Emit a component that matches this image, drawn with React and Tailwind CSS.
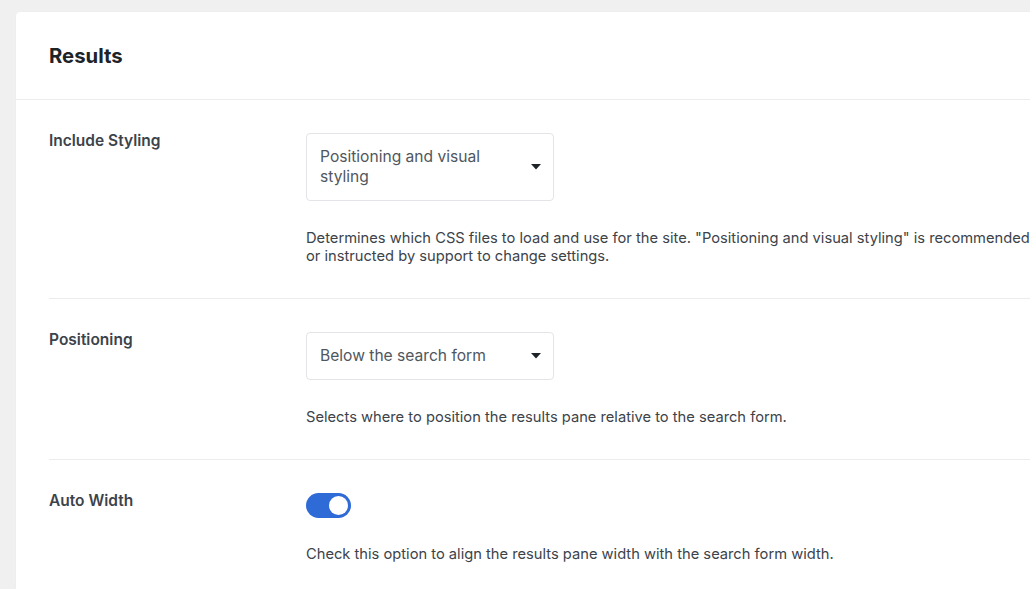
import React from "react";

const font = { fontFamily: "Inter, 'Noto Sans', sans-serif" };

function Caret() {
  return (
    <svg width="10" height="6" viewBox="0 0 10 6" className="shrink-0">
      <path d="M0 0 L10 0 L5 5.5 Z" fill="#1d2327" />
    </svg>
  );
}

function Select({ children }) {
  return (
    <div className="flex w-[248px] items-center justify-between rounded-[4px] border border-[#e2e4e7] bg-white py-[13px] pl-[13px] pr-[12px]">
      <div className="w-[185px] text-[15.6px] leading-[20px] text-[#50575e]">{children}</div>
      <Caret />
    </div>
  );
}

function Row({ label, children, last }) {
  return (
    <div className={"flex " + (last ? "" : "border-b border-[#ececee]") + " pt-[33px]"}>
      <div className="w-[257px] shrink-0 -mt-[2px] text-[15.5px] font-semibold leading-[20px] text-[#3c434a]">
        {label}
      </div>
      <div className="flex flex-col">{children}</div>
    </div>
  );
}

function Desc({ children }) {
  return (
    <div className="whitespace-nowrap text-[14.7px] leading-[18px] text-[#3c434a]">{children}</div>
  );
}

export default function App() {
  return (
    <div style={font} className="h-[589px] w-[1030px] overflow-hidden bg-[#f0f0f1] pl-4 pt-3">
      <div className="w-[1100px] h-[600px] rounded-tl-[4px] bg-white shadow-[0_0_1px_rgba(0,0,0,0.08)]">
        <div className="flex h-[88px] items-center border-b border-[#ececee] px-[33px] pt-[1px]">
          <h1 className="text-[20.3px] font-bold text-[#1d2327]">Results</h1>
        </div>
        <div className="px-[33px]">
          <Row label="Include Styling">
            <Select>Positioning and visual styling</Select>
            <div className="mt-[28px] pb-[33px]">
              <Desc>
                Determines which CSS files to load and use for the site. "Positioning and visual styling" is recommended,
              </Desc>
              <Desc>or instructed by support to change settings.</Desc>
            </div>
          </Row>
          <Row label="Positioning">
            <Select>Below the search form</Select>
            <div className="mt-[28px] pb-[33px]">
              <Desc>Selects where to position the results pane relative to the search form.</Desc>
            </div>
          </Row>
          <Row label="Auto Width" last>
            <div className="flex h-[25px] w-[45px] items-center justify-end rounded-full bg-[#2f6bd6] pr-[3px]">
              <div className="h-[19px] w-[19px] rounded-full bg-white" />
            </div>
            <div className="mt-[27px]">
              <Desc>Check this option to align the results pane width with the search form width.</Desc>
            </div>
          </Row>
        </div>
      </div>
    </div>
  );
}
